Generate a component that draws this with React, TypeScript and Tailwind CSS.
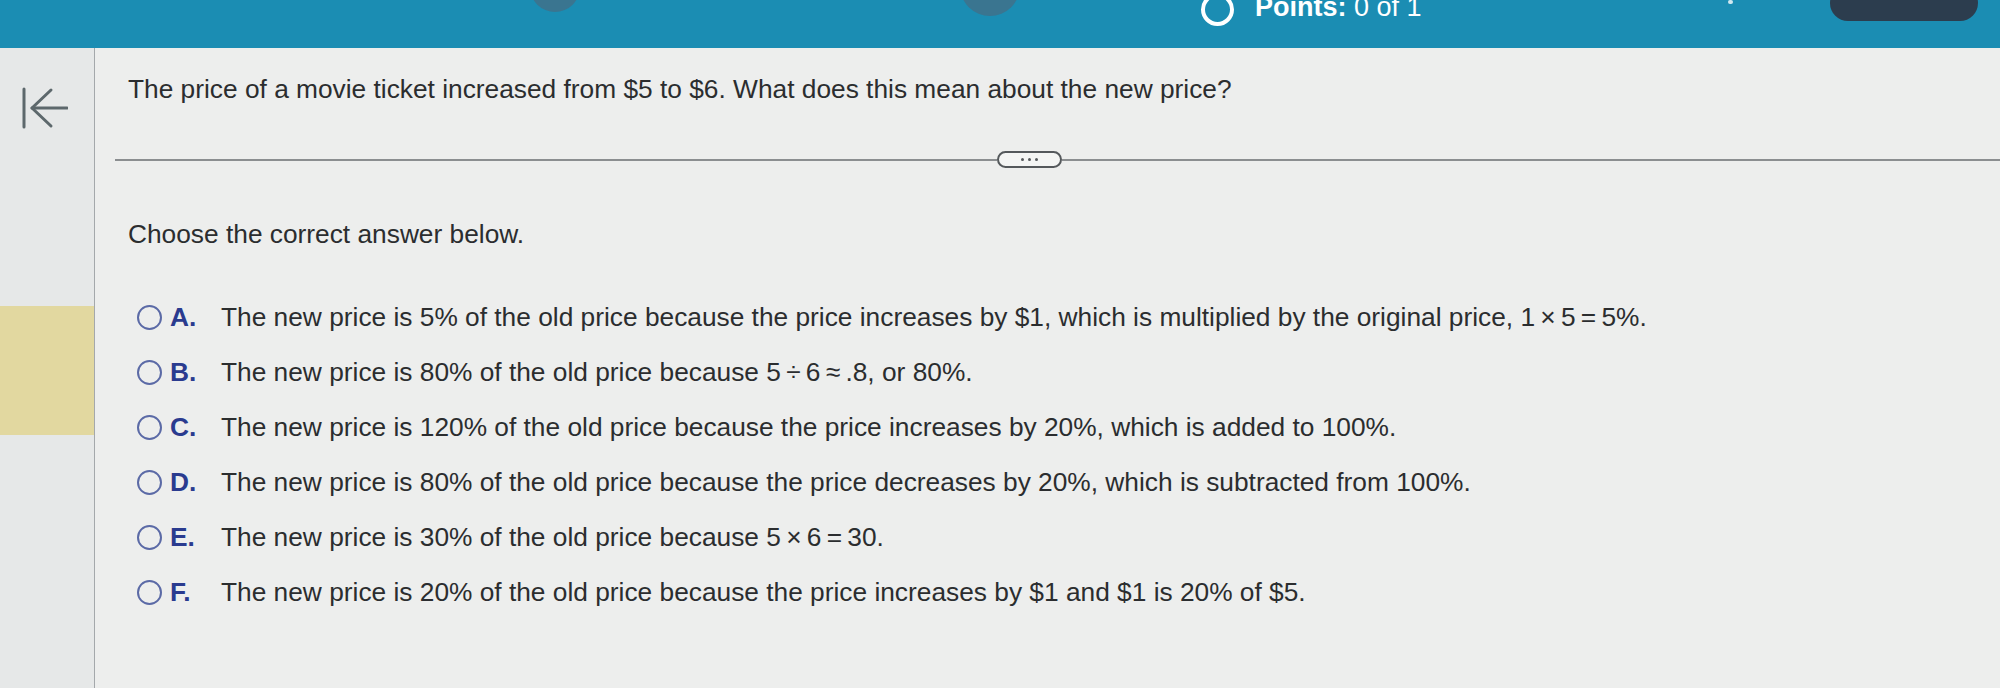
import React from "react";

const options = [
  { letter: "A.", text: "The new price is 5% of the old price because the price increases by $1, which is multiplied by the original price, 1\u2009\u00d7\u20095\u2009=\u20095%." },
  { letter: "B.", text: "The new price is 80% of the old price because 5\u2009\u00f7\u20096\u2009\u2248\u2009.8, or 80%." },
  { letter: "C.", text: "The new price is 120% of the old price because the price increases by 20%, which is added to 100%." },
  { letter: "D.", text: "The new price is 80% of the old price because the price decreases by 20%, which is subtracted from 100%." },
  { letter: "E.", text: "The new price is 30% of the old price because 5\u2009\u00d7\u20096\u2009=\u200930." },
  { letter: "F.", text: "The new price is 20% of the old price because the price increases by $1 and $1 is 20% of $5." },
];

function BackIcon() {
  return (
    <svg width="46" height="42" viewBox="0 0 46 42" fill="none" stroke="#5d686c" strokeWidth="3" strokeLinecap="round" strokeLinejoin="round">
      <line x1="2" y1="2" x2="2" y2="40" />
      <line x1="10" y1="21" x2="45" y2="21" />
      <polyline points="29,3 10,21 29,39" />
    </svg>
  );
}

export default function App() {
  return (
    <div className="w-[2000px] h-[688px] overflow-hidden bg-[#edeeed] flex flex-col" style={{ fontFamily: '"Liberation Sans", Arial, sans-serif' }}>
      {/* top bar */}
      <div className="h-[48px] shrink-0 bg-[#1b8db3] flex items-start overflow-hidden">
        <div className="ml-[530px] w-[50px] h-[50px] -mt-[38px] rounded-full bg-[#3a7590]" />
        <div className="ml-[380px] w-[60px] h-[60px] -mt-[44px] rounded-full bg-[#3a7590]" />
        <div className="ml-[181px] w-[33px] h-[33px] -mt-[7px] rounded-full border-[4px] border-white" />
        <div className="ml-[21px] -mt-[6px] text-[27px] leading-[27px] text-white whitespace-nowrap">
          <span className="font-bold">Points:</span> 0 of 1
        </div>
        <div className="ml-[306px] w-[5px] h-[4px] rounded-full bg-white/80" />
        <div className="ml-[97px] w-[148px] h-[36px] -mt-[15px] rounded-full bg-[#2c3d4e]" />
      </div>

      <div className="flex flex-1">
        {/* sidebar */}
        <div className="w-[95px] shrink-0 bg-[#e6e8e8] border-r border-[#a4a8ab] flex flex-col">
          <div className="mt-[39px] ml-[22px]">
            <BackIcon />
          </div>
          <div className="mt-[177px] h-[129px] bg-[#e2d8a0]" />
        </div>

        {/* content */}
        <div className="flex-1 flex flex-col text-[#2b2d2f]">
          <p className="mt-[26px] pl-[33px] text-[26.3px] leading-[30px]">
            The price of a movie ticket increased from $5 to $6. What does this mean about the new price?
          </p>

          <div className="mt-[47px] pl-[20px] flex items-center">
            <div className="w-[882px] h-[2px] bg-[#8b8e90]" />
            <div className="w-[65px] h-[17px] rounded-full border-2 border-[#55595c] bg-[#f4f5f4] flex items-center justify-center gap-[4px]">
              <span className="w-[3px] h-[3px] rounded-full bg-[#55595c]" />
              <span className="w-[3px] h-[3px] rounded-full bg-[#55595c]" />
              <span className="w-[3px] h-[3px] rounded-full bg-[#55595c]" />
            </div>
            <div className="flex-1 h-[2px] bg-[#8b8e90]" />
          </div>

          <p className="mt-[51px] pl-[33px] text-[26.3px] leading-[30px]">Choose the correct answer below.</p>

          <div className="mt-[41px] pl-[33px] flex flex-col">
            {options.map((o) => (
              <div key={o.letter} className="h-[55px] flex items-center text-[26.3px] whitespace-nowrap">
                <span className="ml-[9px] w-[25px] h-[25px] rounded-full border-2 border-[#5b6aa6] shrink-0" />
                <span className="ml-[8px] w-[51px] font-bold text-[#2a3b8f]">{o.letter}</span>
                <span>{o.text}</span>
              </div>
            ))}
          </div>
        </div>
      </div>
    </div>
  );
}
